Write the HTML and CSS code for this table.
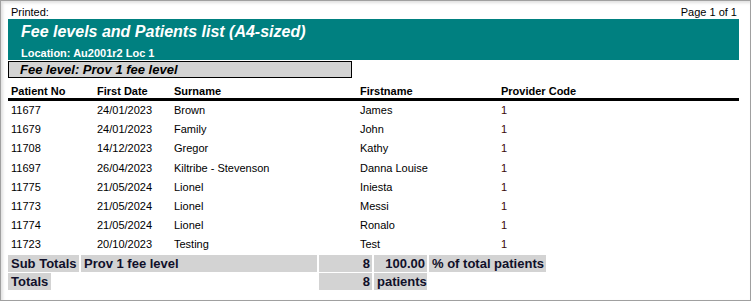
FILE: index.html
```html
<!DOCTYPE html>
<html>
<head>
<meta charset="utf-8">
<link rel="stylesheet" href="styles.css">
</head>
<body>
<div class="frame">
  <div class="topline"><span>Printed:</span><span>Page 1 of 1</span></div>
  <div class="banner">
    <div class="title">Fee levels and Patients list (A4-sized)</div>
    <div class="location">Location: Au2001r2 Loc 1</div>
  </div>
  <div class="feelevel">Fee level: Prov 1 fee level</div>
  <div class="row head">
    <span>Patient No</span><span>First Date</span><span>Surname</span><span>Firstname</span><span>Provider Code</span>
  </div>
  <div class="rows">
    <div class="row"><span>11677</span><span>24/01/2023</span><span>Brown</span><span>James</span><span class="pc">1</span></div>
    <div class="row"><span>11679</span><span>24/01/2023</span><span>Family</span><span>John</span><span class="pc">1</span></div>
    <div class="row"><span>11708</span><span>14/12/2023</span><span>Gregor</span><span>Kathy</span><span class="pc">1</span></div>
    <div class="row"><span>11697</span><span>26/04/2023</span><span>Kiltribe - Stevenson</span><span>Danna Louise</span><span class="pc">1</span></div>
    <div class="row"><span>11775</span><span>21/05/2024</span><span>Lionel</span><span>Iniesta</span><span class="pc">1</span></div>
    <div class="row"><span>11773</span><span>21/05/2024</span><span>Lionel</span><span>Messi</span><span class="pc">1</span></div>
    <div class="row"><span>11774</span><span>21/05/2024</span><span>Lionel</span><span>Ronalo</span><span class="pc">1</span></div>
    <div class="row"><span>11723</span><span>20/10/2023</span><span>Testing</span><span>Test</span><span class="pc">1</span></div>
  </div>
  <div class="totals">
    <span class="cell c1">Sub Totals</span>
    <span class="cell c2">Prov 1 fee level</span>
    <span class="cell c3 num">8</span>
    <span class="cell c4 num">100.00</span>
    <span class="cell c5">% of total patients</span>
    <span class="cell c1 short">Totals</span>
    <span class="c2"></span>
    <span class="cell c3 num">8</span>
    <span class="cell c4">patients</span>
  </div>
</div>
</body>
</html>
```
FILE: styles.css
```css
html, body {
  margin: 0;
  padding: 0;
  background: #ffffff;
}
.frame {
  width: 751px;
  height: 301px;
  box-sizing: border-box;
  border: 1px solid #a0a0a0;
  padding: 0 11px 0 7px;
  box-shadow: inset 2px 2px 3px rgba(0, 0, 0, 0.12);
  font-family: "Liberation Sans", Arial, sans-serif;
  color: #000;
}
.topline {
  height: 18px;
  display: flex;
  justify-content: space-between;
  align-items: flex-end;
  font-size: 11px;
  line-height: 13px;
  padding: 0 3px 0 3px;
}
.topline span:last-child {
  margin-right: -1px;
}
.banner {
  background: #008080;
  height: 41px;
  box-sizing: border-box;
  padding: 3px 0 0 13px;
  color: #ffffff;
  font-weight: bold;
}
.title {
  font-size: 16px;
  font-style: italic;
  line-height: 20px;
}
.location {
  font-size: 11px;
  line-height: 13px;
  margin-top: 5px;
}
.feelevel {
  margin-top: 1px;
  width: 344px;
  height: 17px;
  box-sizing: border-box;
  border: 1px solid #000;
  background: #d3d3d3;
  font-size: 13px;
  font-weight: bold;
  font-style: italic;
  line-height: 15px;
  padding-left: 11px;
}
.row {
  display: grid;
  grid-template-columns: 86px 77px 186px 141px 1fr;
  font-size: 11px;
  line-height: 13px;
  padding-left: 3px;
  height: 19px;
  align-items: center;
}
.row.head {
  margin-top: 5px;
  height: 15px;
  font-weight: bold;
  border-bottom: 3px solid #000;
  align-items: end;
}
.rows {
  padding-top: 0;
}
.rows .row:nth-child(4) {
  height: 20px;
}
.pc {
  color: #3a0808;
}
.totals {
  margin-top: 1px;
  display: grid;
  grid-template-columns: 71px 236px 53px 53px auto 1fr;
  grid-auto-rows: 17px;
  column-gap: 2px;
  row-gap: 1px;
  font-size: 13px;
  font-weight: bold;
  line-height: 17px;
  color: #10102a;
}
.cell {
  background: #d3d3d3;
  padding: 0 2px 0 3px;
  white-space: nowrap;
}
.c1 { grid-column: 1; }
.c2 { grid-column: 2; }
.c3 { grid-column: 3; }
.c4 { grid-column: 4; }
.c5 { grid-column: 5; }
.short {
  justify-self: start;
  padding-right: 3px;
}
.num {
  text-align: right;
}
```
